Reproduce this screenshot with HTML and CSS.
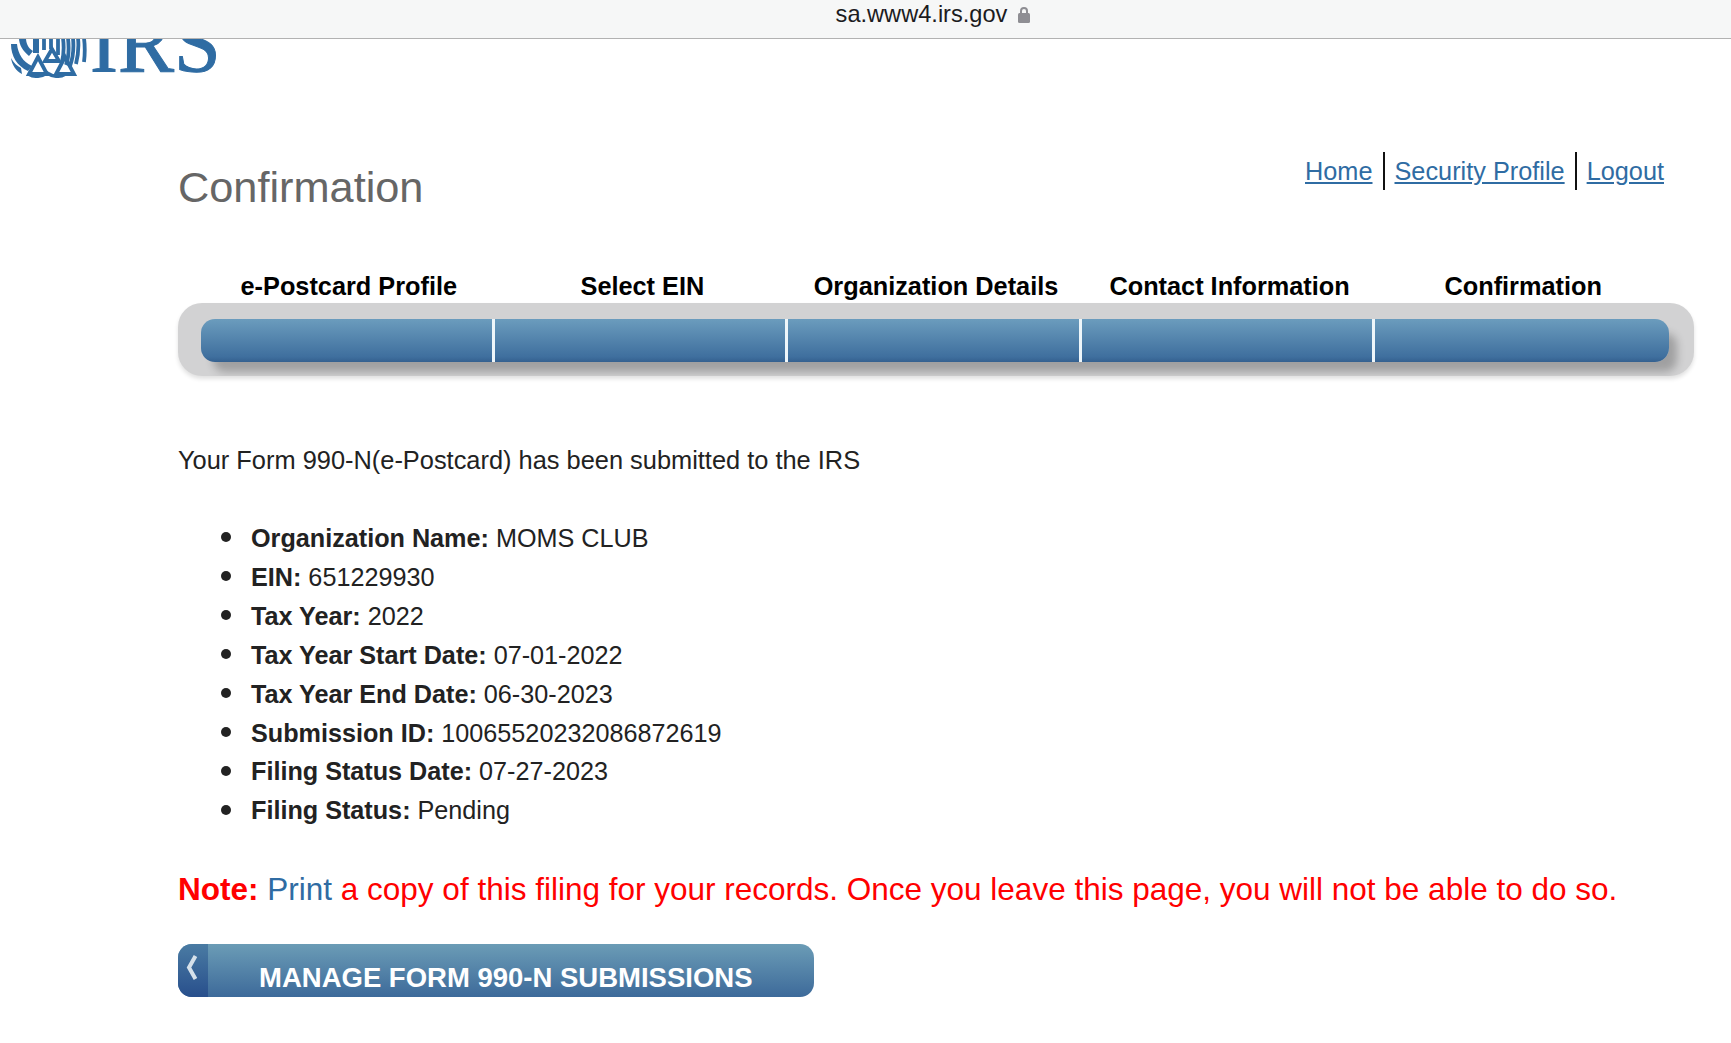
FILE: index.html
```html
<!DOCTYPE html>
<html lang="en">
<head>
<meta charset="utf-8">
<title>Confirmation</title>
<link rel="stylesheet" href="styles.css">
</head>
<body>
<div class="urlbar">
  <span class="url">sa.www4.irs.gov</span>
  <svg class="lock" width="12" height="18" viewBox="0 0 12 18"><path d="M3 8V5a3 3 0 0 1 6 0v3" fill="none" stroke="#8e8e93" stroke-width="2"/><rect x="0" y="7" width="12" height="10" rx="1.5" fill="#8e8e93"/></svg>
</div>
<header class="logo">
  <svg class="seal" width="78" height="40" viewBox="0 0 78 40">
    <g fill="#2f6ca3">
      <path d="M0 6C0 18 6 28 17 33l4-5C12 24 7 16 6 6z"/>
      <path d="M0 20c1 7 5 13 11 16l-1-6C6 28 3 25 0 20z"/>
      <path d="M8 0c0 7 4 13 10 18l4-5C17 10 15 5 15 0z"/>
      <path d="M22 0h6v15h-6z"/>
    </g>
    <g fill="none" stroke="#2f6ca3" stroke-width="3.8">
      <path d="M33 0v12"/><path d="M40 0v11"/><path d="M47 0v17"/>
      <path d="M52 0c1 8 1 16-1 24"/><path d="M57 0c1 9 1 19-2 27"/><path d="M62 0c1 10 0 20-3 28"/><path d="M67 0c1 9 0 18-2 26"/><path d="M73 0c1 8 1 16 0 24"/>
      <path d="M27 19l-9 17h18z"/><path d="M41 11l-7 12h14z"/><path d="M54 19l-9 17h18z"/>
      <path d="M18 36c5 3 12 3 18-1c6 4 13 4 18 1"/>
    </g>
  </svg>
  <span class="irs">IRS</span>
</header>
<main class="page">
  <div class="top">
    <h1 class="title">Confirmation</h1>
    <nav class="links"><a href="#">Home</a><a href="#">Security Profile</a><a href="#">Logout</a></nav>
  </div>
  <div class="labels">
    <span>e-Postcard Profile</span><span>Select EIN</span><span>Organization Details</span><span>Contact Information</span><span>Confirmation</span>
  </div>
  <div class="track">
    <div class="bar"><i></i><i></i><i></i><i></i><i></i></div>
  </div>
  <p class="intro">Your Form 990-N(e-Postcard) has been submitted to the IRS</p>
  <ul class="facts">
    <li><b>Organization Name:</b> MOMS CLUB</li>
    <li><b>EIN:</b> 651229930</li>
    <li><b>Tax Year:</b> 2022</li>
    <li><b>Tax Year Start Date:</b> 07-01-2022</li>
    <li><b>Tax Year End Date:</b> 06-30-2023</li>
    <li><b>Submission ID:</b> 10065520232086872619</li>
    <li><b>Filing Status Date:</b> 07-27-2023</li>
    <li><b>Filing Status:</b> Pending</li>
  </ul>
  <p class="note"><b>Note:</b> <a href="#">Print</a> a copy of this filing for your records. Once you leave this page, you will not be able to do so.</p>
  <a class="btn" href="#">
    <span class="chev"><svg width="12" height="27" viewBox="0 0 12 27"><path d="M9.5 2L3 13.5 9.5 25" fill="none" stroke="#d5e0ea" stroke-width="4"/></svg></span>
    <span class="btn-text">MANAGE FORM 990-N SUBMISSIONS</span>
  </a>
</main>
</body>
</html>
```
FILE: styles.css
```css
* { box-sizing: border-box; }
html, body { margin: 0; padding: 0; }
body { width: 1731px; height: 1043px; overflow: hidden; background: #fff; font-family: "Liberation Sans", Arial, sans-serif; color: #222; font-size: 25.2px; }
.urlbar { height: 39px; background: #f6f7f7; border-bottom: 1px solid #b2b2b2; display: flex; justify-content: center; gap: 11px; padding: 0 0 9px 135px; align-items: center; position: relative; z-index: 2; }
.url { font-size: 23.6px; color: #1c1c1e; line-height: 1; }
.lock { display: block; }
.logo { height: 59px; margin-top: -20px; display: flex; align-items: flex-end; padding-left: 11px; color: #2f6ca3; }
.seal { display: block; flex: none; }
.irs { font-family: "Liberation Serif", serif; font-size: 84px; line-height: 1; margin: 0 0 -8px 1px; height: 84px; -webkit-text-stroke: 1px #2f6ca3; }
.page { padding: 0 37px 0 178px; }
.top { display: flex; justify-content: space-between; align-items: flex-start; padding-top: 74px; height: 218px; }
.title { margin: 0; font-size: 43.3px; font-weight: 400; color: #666; line-height: 1; padding-top: 14px; }
.links { display: flex; margin-right: 20px; }
.links a { color: #2f6ca3; font-size: 25.3px; line-height: 38px; padding: 0 10px; border-left: 2px solid #111; }
.links a:first-child { border-left: 0; }
.labels { display: grid; grid-template-columns: repeat(5, 293.6px); padding-left: 24px; margin-top: -26px; height: 33px; color: #000; font-weight: 700; font-size: 25.3px; line-height: 32px; text-align: center; }
.track { height: 73px; width: 1516px; background: #d2d2d3; border-radius: 24px; padding: 16px 25px 0 23px; overflow: hidden; box-shadow: 0 3px 4px rgba(0,0,0,.12); }
.bar { display: grid; grid-template-columns: repeat(5, 1fr); height: 43px; border-radius: 14px; box-shadow: 10px 12px 8px -2px rgba(0,0,0,.24); }
.bar i { display: block; background: linear-gradient(#6b9cbd, #3f6f9e 88%, #34608f); border-right: 3px solid #eef6fa; }
.bar i:first-child { border-radius: 14px 0 0 14px; }
.bar i:last-child { border-right: 0; border-radius: 0 14px 14px 0; }
.intro { margin: 0; padding-top: 68px; line-height: 32px; font-size: 25.4px; }
.facts { margin: 0; padding: 43px 0 0 73px; list-style: none; line-height: 38.9px; }
.facts li::before { content: ""; display: inline-block; width: 10px; height: 10px; border-radius: 50%; background: #222; margin: 0 20px 0 -30px; vertical-align: 0.18em; }
.facts b { font-weight: 700; }
.note { margin: 0; padding-top: 39px; font-size: 31.5px; line-height: 40px; color: #f00; }
.note b { font-weight: 700; }
.note a { color: #2f6ca3; text-decoration: none; }
.btn { display: flex; width: 636px; height: 53px; margin-top: 35px; border-radius: 14px; overflow: hidden; color: #fff; text-decoration: none; background: linear-gradient(#6b9cb6, #3d6a9a); font-weight: 700; font-size: 27.5px; }
.chev { width: 30px; flex: none; background: linear-gradient(#4a7ba3, #284f8c); display: flex; padding: 10px 0 0 8px; }
.chev svg { display: block; }
.btn-text { padding: 18px 0 0 51px; line-height: 32px; white-space: nowrap; }
```
